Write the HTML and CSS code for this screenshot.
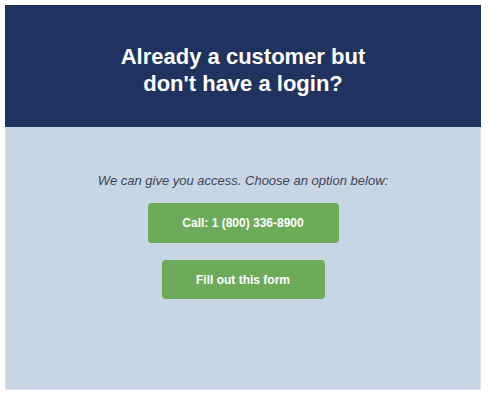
FILE: index.html
```html
<!DOCTYPE html>
<html lang="en">
<head>
  <meta charset="UTF-8">
  <title>Already a customer</title>
  <link rel="stylesheet" href="styles.css">
</head>
<body>
  <div class="panel">
    <div class="panel-head">
      <h1>Already a customer but<br>don't have a login?</h1>
    </div>
    <div class="panel-body">
      <p class="lead">We can give you access. Choose an option below:</p>
      <a class="btn btn-call" href="#">Call: 1 (800) 336-8900</a>
      <a class="btn btn-form" href="#">Fill out this form</a>
    </div>
  </div>
</body>
</html>
```
FILE: styles.css
```css
* { margin: 0; padding: 0; box-sizing: border-box; }
body { background: #fff; font-family: "Liberation Sans", Arial, sans-serif; padding: 5px 8px 0 5px; }
.panel { width: 476px; height: 385px; display: flex; flex-direction: column; border: 1px solid #dde3ec; }
.panel-head { height: 122px; background: #1f3260; display: flex; justify-content: center; padding-top: 38px; margin: -1px -1px 0; }
.panel-head h1 { color: #fff; font-size: 22px; line-height: 27px; font-weight: bold; text-align: center; }
.panel-body { flex: 1; background: #c8d5e5; display: flex; flex-direction: column; align-items: center; padding-top: 45px; }
.lead { font-size: 13px; font-style: italic; color: #3d4652; line-height: 18px; }
.btn { display: flex; justify-content: center; align-items: center; height: 40px; background: #6dab58; color: #fff; font-size: 12px; font-weight: bold; text-decoration: none; border-radius: 4px; }
.btn-call { width: 191px; margin-top: 13px; }
.btn-form { width: 163px; height: 39px; margin-top: 17px; }
```
